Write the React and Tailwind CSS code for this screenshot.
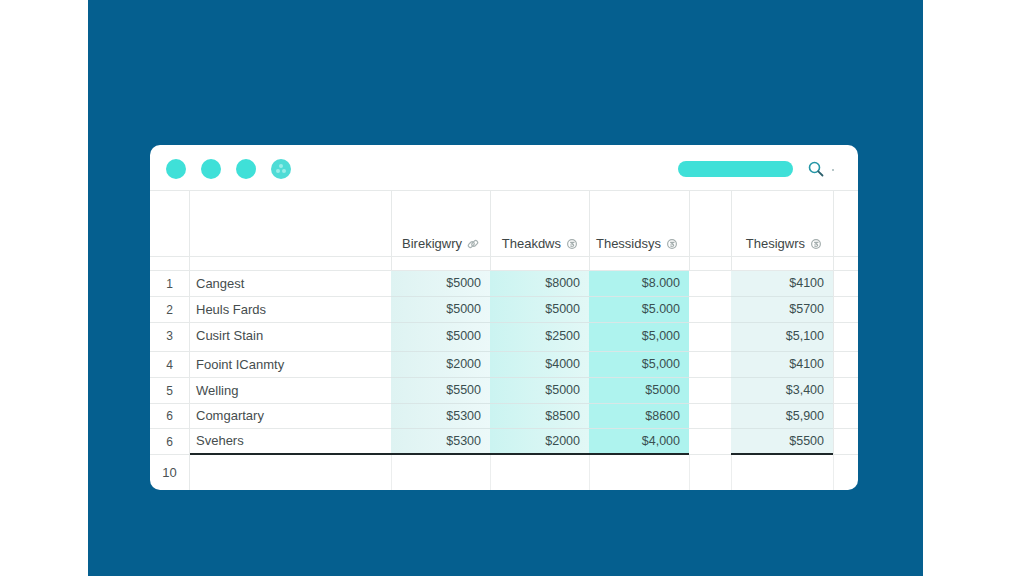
import React from 'react';

const gridCols = 'grid grid-cols-[40px_202px_99px_99px_100px_42px_102px_24px]';
const bodyCols = 'grid grid-cols-[40px_201px_99px_99px_100px_42px_102px_25px]';
const line = 'border-r border-b border-[#e6e9e9]';

const rows = [
  { n: '1', name: 'Cangest', a: '$5000', b: '$8000', c: '$8.000', d: '$4100', h: 'h-[26px]' },
  { n: '2', name: 'Heuls Fards', a: '$5000', b: '$5000', c: '$5.000', d: '$5700', h: 'h-[26px]' },
  { n: '3', name: 'Cusirt Stain', a: '$5000', b: '$2500', c: '$5,000', d: '$5,100', h: 'h-[29px]', lift: true },
  { n: '4', name: 'Fooint ICanmty', a: '$2000', b: '$4000', c: '$5,000', d: '$4100', h: 'h-[26px]' },
  { n: '5', name: 'Welling', a: '$5500', b: '$5000', c: '$5000', d: '$3,400', h: 'h-[26px]' },
  { n: '6', name: 'Comgartary', a: '$5300', b: '$8500', c: '$8600', d: '$5,900', h: 'h-[25px]' },
  { n: '6', name: 'Svehers', a: '$5300', b: '$2000', c: '$4,000', d: '$5500', h: 'h-[26px]', last: true },
];

const LinkIcon = () => (
  <svg width="12" height="12" viewBox="0 0 11 11" fill="none" stroke="#a9b3b3" strokeWidth="1.1">
    <rect x="0.9" y="4.2" width="6" height="3.6" rx="1.8" transform="rotate(-45 3.9 6)" />
    <rect x="4.1" y="3.2" width="6" height="3.6" rx="1.8" transform="rotate(-45 7.1 5)" />
  </svg>
);

const RingIcon = () => (
  <svg width="12" height="12" viewBox="0 0 11 11" fill="none" stroke="#a3adad" strokeWidth="1.1">
    <circle cx="5.5" cy="5.5" r="4" />
    <path d="M3.8 4h3.2L5 5.5c1.4 0 2.2.5 2 1.4-.2.8-1.8.9-3 .3" />
  </svg>
);

const Head = ({ label, icon }) => (
  <div className={`${line} flex items-end justify-end gap-[5px] pr-[11px] pb-[3px] text-[13px] leading-[18px] text-[#3d4646]`}>
    <span>{label}</span>
    <span className="mb-[3px]">{icon}</span>
  </div>
);

const Num = ({ bg, last, lift, children }) => (
  <div className={`${bg} flex items-center justify-end pr-[9px] text-[12.5px] text-[#3a4f50] ${lift ? 'pb-[2px]' : ''} ${last ? 'border-b-2 border-b-[#1d2628]' : 'border-b border-b-[#d9e6e6]'}`}>
    {children}
  </div>
);

export default function App() {
  return (
    <div className="h-[576px] overflow-hidden bg-white" style={{ fontFamily: '"Liberation Sans", Arial, sans-serif' }}>
      <div className="ml-[88px] h-full w-[835px] bg-[#055f8f] pl-[62px] pt-[145px]">
        <div className="h-[345px] w-[708px] overflow-hidden rounded-[10px] bg-white">
          {/* top bar */}
          <div className="flex h-[46px] items-center border-b border-[#e6e9e9] pl-[16px] pt-[2px]">
            <div className="flex gap-[15px]">
              <span className="h-[20px] w-[20px] rounded-full bg-[#3fe0d8]" />
              <span className="h-[20px] w-[20px] rounded-full bg-[#3fe0d8]" />
              <span className="h-[20px] w-[20px] rounded-full bg-[#3fe0d8]" />
              <span className="flex h-[20px] w-[20px] items-center justify-center rounded-full bg-[#4fdcd6]">
                <svg width="12" height="12" viewBox="0 0 12 12" fill="#9aeee8">
                  <circle cx="6" cy="3" r="2" />
                  <circle cx="3" cy="8" r="2" />
                  <circle cx="9" cy="8" r="2" />
                </svg>
              </span>
            </div>
            <div className="ml-[387px] h-[16px] w-[115px] rounded-full bg-[#3fe0d8]" />
            <svg width="16" height="16" viewBox="0 0 16 16" fill="none" className="ml-[15px]">
              <circle cx="6.5" cy="6.5" r="5" stroke="#2496a6" strokeWidth="1.6" />
              <path d="M10.3 10.3 14.5 14.5" stroke="#2c5f6c" strokeWidth="1.8" strokeLinecap="round" />
            </svg>
            <span className="ml-[8px] mt-[3px] h-[2px] w-[2px] rounded-full bg-[#9fb4b6]" />
          </div>

          {/* column headers */}
          <div className={`${gridCols} h-[66px]`}>
            <div className={line} />
            <div className={line} />
            <Head label="Birekigwry" icon={<LinkIcon />} />
            <Head label="Theakdws" icon={<RingIcon />} />
            <Head label="Thessidsys" icon={<RingIcon />} />
            <div className={line} />
            <Head label="Thesigwrs" icon={<RingIcon />} />
            <div className="border-b border-[#e6e9e9]" />
          </div>

          {/* spacer row */}
          <div className={`${gridCols} h-[14px]`}>
            <div className={line} />
            <div className={line} />
            <div className={line} />
            <div className={line} />
            <div className={line} />
            <div className={line} />
            <div className={line} />
            <div className="border-b border-[#e6e9e9]" />
          </div>

          {rows.map((r, i) => (
            <div key={i} className={`${bodyCols} ${r.h}`}>
              <div className={`${line} flex items-center justify-center text-[12px] text-[#4a5253] ${r.lift ? 'pb-[2px]' : ''}`}>{r.n}</div>
              <div className={`flex items-center pl-[6px] text-[13px] text-[#454d4e] ${r.lift ? 'pb-[2px]' : ''} ${r.last ? 'border-b-2 border-b-[#1d2628]' : 'border-b border-b-[#e6e9e9]'}`}>{r.name}</div>
              <Num bg="bg-gradient-to-r from-[#def3f2] to-[#ecf9f9]" last={r.last} lift={r.lift}>{r.a}</Num>
              <Num bg="bg-gradient-to-r from-[#cbf4f1] to-[#e2f8f6]" last={r.last} lift={r.lift}>{r.b}</Num>
              <Num bg="bg-[#aef3ee]" last={r.last} lift={r.lift}>{r.c}</Num>
              <div className="border-b border-[#e6e9e9]" />
              <Num bg="bg-[#e7f5f5]" last={r.last} lift={r.lift}>{r.d}</Num>
              <div className="border-b border-l border-[#e6e9e9]" />
            </div>
          ))}

          {/* last row */}
          <div className={`${gridCols} h-[36px]`}>
            <div className="flex items-center justify-center border-r border-[#e6e9e9] text-[13px] text-[#4a5253]">10</div>
            <div className="border-r border-[#eceeee]" />
            <div className="border-r border-[#eceeee]" />
            <div className="border-r border-[#eceeee]" />
            <div className="border-r border-[#eceeee]" />
            <div className="border-r border-[#eceeee]" />
            <div className="border-r border-[#eceeee]" />
            <div />
          </div>
        </div>
      </div>
    </div>
  );
}
